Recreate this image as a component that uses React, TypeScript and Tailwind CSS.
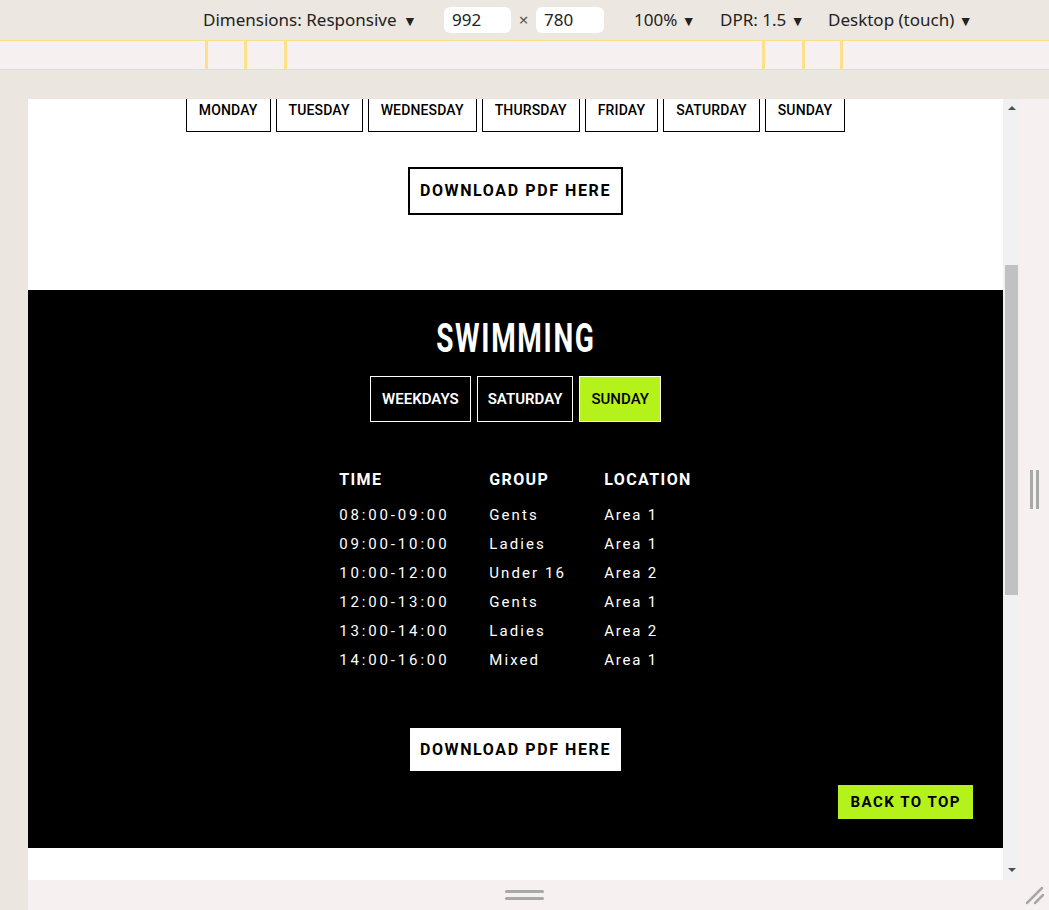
const days = ['MONDAY', 'TUESDAY', 'WEDNESDAY', 'THURSDAY', 'FRIDAY', 'SATURDAY', 'SUNDAY'];

const rows = [
  { time: '08:00-09:00', group: 'Gents', location: 'Area 1' },
  { time: '09:00-10:00', group: 'Ladies', location: 'Area 1' },
  { time: '10:00-12:00', group: 'Under 16', location: 'Area 2' },
  { time: '12:00-13:00', group: 'Gents', location: 'Area 1' },
  { time: '13:00-14:00', group: 'Ladies', location: 'Area 2' },
  { time: '14:00-16:00', group: 'Mixed', location: 'Area 1' },
];

function Toolbar() {
  return (
    <div className="h-[40px] bg-[#ede7e1] flex items-center text-[17px] text-[#222] font-['Noto_Sans',sans-serif]">
      <span className="ml-[203px] w-[241px] whitespace-nowrap">
        Dimensions: Responsive <span className="text-[14px] ml-[2px]">▼</span>
      </span>
      <div className="w-[67px] h-[26px] bg-white rounded-[6px] flex items-center pl-[8px]">992</div>
      <span className="w-[25px] text-center text-[#555]">×</span>
      <div className="w-[68px] h-[26px] bg-white rounded-[6px] flex items-center pl-[8px]">780</div>
      <span className="ml-[30px] w-[86px] whitespace-nowrap">
        100% <span className="text-[14px]">▼</span>
      </span>
      <span className="w-[108px] whitespace-nowrap">
        DPR: 1.5 <span className="text-[14px]">▼</span>
      </span>
      <span className="whitespace-nowrap">
        Desktop (touch) <span className="text-[14px]">▼</span>
      </span>
    </div>
  );
}

function Ruler() {
  return (
    <div className="h-[30px] bg-[#f6f1f0] border-y border-[#fbe08c] flex">
      <div className="ml-[205px] w-[3px] bg-[#fde08a]" />
      <div className="ml-[36px] w-[3px] bg-[#fde08a]" />
      <div className="ml-[37px] w-[3px] bg-[#fde08a]" />
      <div className="ml-[475px] w-[3px] bg-[#fde08a]" />
      <div className="ml-[37px] w-[3px] bg-[#fde08a]" />
      <div className="ml-[35px] w-[3px] bg-[#fde08a]" />
    </div>
  );
}

function Scrollbar() {
  return (
    <div className="w-[17px] bg-[#f1f1f1] flex flex-col items-center">
      <div className="mt-[7px] w-0 h-0 border-x-[4px] border-x-transparent border-b-[4px] border-b-[#505050]" />
      <div className="mt-[155px] w-[13px] h-[330px] bg-[#c1c1c1]" />
      <div className="mt-[273px] w-0 h-0 border-x-[4px] border-x-transparent border-t-[4px] border-t-[#505050]" />
    </div>
  );
}

function Page() {
  return (
    <div className="w-[975px] h-[781px] overflow-hidden bg-white font-['Roboto',sans-serif]">
      {/* white section with day tabs */}
      <section className="-mt-[11px] pb-[75px] flex flex-col items-center">
        <div className="flex gap-[5px]">
          {days.map((d) => (
            <button
              key={d}
              className="h-[44px] px-[12px] border border-black bg-white text-black text-[14px] font-medium tracking-[0.01em]"
            >
              {d}
            </button>
          ))}
        </div>
        <button className="mt-[35px] h-[48px] px-[10px] border-2 border-black text-black text-[16px] font-bold tracking-[0.1em]">
          DOWNLOAD PDF HERE
        </button>
      </section>

      {/* swimming section */}
      <section className="bg-black pt-[25px] pb-[29px] flex flex-col items-center text-white">
        <h2 className="h-[48px] leading-[48px] text-[40px] font-bold tracking-[0.06em] scale-x-[0.7]">SWIMMING</h2>
        <div className="mt-[13px] flex gap-[6px]">
          <button className="h-[46px] px-[11px] border border-white text-white text-[15px] font-semibold">WEEKDAYS</button>
          <button className="h-[46px] px-[10px] border border-white text-white text-[15px] font-semibold">SATURDAY</button>
          <button className="h-[46px] px-[11px] border border-white bg-[#b5f21c] text-black text-[15px] font-medium">SUNDAY</button>
        </div>

        <div className="mt-[46px] grid grid-cols-[150px_115px_auto]">
          <div className="h-[24px] leading-[24px] text-[16px] font-bold tracking-[1.4px]">TIME</div>
          <div className="h-[24px] leading-[24px] text-[16px] font-bold tracking-[1.4px]">GROUP</div>
          <div className="h-[24px] leading-[24px] text-[16px] font-bold tracking-[1.4px]">LOCATION</div>
          {rows.map((r, i) => (
            <div key={i} className="contents text-[15px]">
              <div className={`h-[29px] leading-[29px] tracking-[0.19em] ${i === 0 ? 'mt-[9px]' : ''}`}>{r.time}</div>
              <div className={`h-[29px] leading-[29px] tracking-[0.14em] ${i === 0 ? 'mt-[9px]' : ''}`}>{r.group}</div>
              <div className={`h-[29px] leading-[29px] tracking-[0.12em] ${i === 0 ? 'mt-[9px]' : ''}`}>{r.location}</div>
            </div>
          ))}
        </div>

        <button className="mt-[53px] h-[43px] px-[10px] bg-white text-black text-[16px] font-bold tracking-[0.1em]">
          DOWNLOAD PDF HERE
        </button>
        <div className="mt-[14px] self-stretch flex justify-end pr-[30px]">
          <button className="h-[34px] px-[12px] bg-[#b5f21c] text-black text-[15px] font-bold tracking-[0.1em]">
            BACK TO TOP
          </button>
        </div>
      </section>
      <section className="h-[40px] bg-white" />
    </div>
  );
}

export default function App() {
  return (
    <div className="w-[1049px] h-[910px] overflow-hidden bg-[#ebe6e0] flex flex-col">
      <Toolbar />
      <Ruler />
      <div className="flex flex-1">
        <div className="w-[28px] bg-[#ebe6e0]" />
        <div className="flex-1 flex flex-col">
          <div className="h-[29px] bg-[#ebe6e0]" />
          <div className="flex-1 bg-[#f6f1f0] flex flex-col">
            <div className="flex">
              <Page />
              <Scrollbar />
              <div className="flex-1 flex justify-center items-center gap-[3px]">
                <div className="w-[3px] h-[39px] bg-[#a8a8a8]" />
                <div className="w-[3px] h-[39px] bg-[#a8a8a8]" />
              </div>
            </div>
            <div className="flex-1 flex">
              <div className="w-[992px] flex flex-col items-center justify-center gap-[4px]">
                <div className="w-[39px] h-[3px] bg-[#a8a8a8] rounded-full" />
                <div className="w-[39px] h-[3px] bg-[#a8a8a8] rounded-full" />
              </div>
              <div className="flex-1 flex items-center justify-center">
                <svg width="20" height="20" viewBox="0 0 20 20">
                  <line x1="2" y1="18" x2="17" y2="3" stroke="#a8a8a8" strokeWidth="2.5" strokeLinecap="round" />
                  <line x1="10" y1="18" x2="18" y2="10" stroke="#a8a8a8" strokeWidth="2.5" strokeLinecap="round" />
                </svg>
              </div>
            </div>
          </div>
        </div>
      </div>
    </div>
  );
}
